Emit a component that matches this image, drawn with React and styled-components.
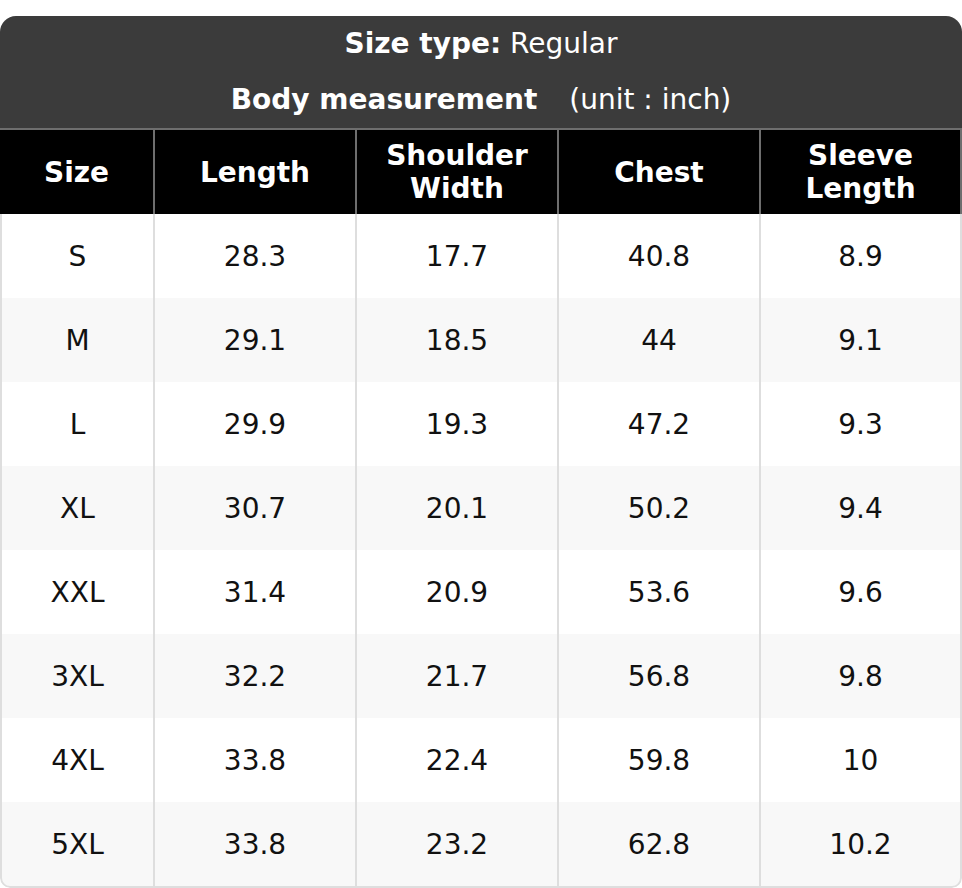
import React from 'react';
import styled, { createGlobalStyle } from 'styled-components';

const GlobalStyle = createGlobalStyle`
  * { box-sizing: border-box; }
  body {
    margin: 0;
    background: #ffffff;
    font-family: "DejaVu Sans", "Liberation Sans", sans-serif;
  }
`;

const Page = styled.div`
  padding-top: 16px;
  width: 962px;
`;

const Wrapper = styled.div`
  border-radius: 16px 16px 10px 10px;
  overflow: hidden;
`;

const Table = styled.table`
  width: 962px;
  table-layout: fixed;
  border-collapse: separate;
  border-spacing: 0;
  font-size: 28px;
`;

const TitleCell = styled.th`
  background: #3b3b3b;
  color: #ffffff;
  padding: 0;
  border-bottom: 2px solid #6e6e6e;
  text-align: center;
`;

const TitleLine = styled.div`
  height: 56px;
  line-height: 56px;
  font-weight: ${(p) => (p.$bold ? 700 : 400)};
`;

const Strong = styled.span`
  font-weight: 700;
`;

const Unit = styled.span`
  font-weight: 400;
  margin-left: 32px;
`;

const HeadCell = styled.th`
  background: #000000;
  color: #ffffff;
  font-weight: 700;
  height: 84px;
  padding: 0 8px;
  line-height: 33px;
  text-align: center;
  border-left: ${(p) => (p.$first ? 'none' : '2px solid #6e6e6e')};
  border-right: ${(p) => (p.$last ? '2px solid #6e6e6e' : 'none')};
`;

const Row = styled.tr`
  background: ${(p) => (p.$alt ? '#f8f8f8' : '#ffffff')};
`;

const Cell = styled.td`
  height: ${(p) => (p.$lastRow ? '86px' : '84px')};
  padding: 0;
  color: #111111;
  text-align: center;
  vertical-align: middle;
  border-left: 2px solid #dedede;
  border-right: ${(p) => (p.$last ? '2px solid #dedede' : 'none')};
  border-bottom: ${(p) => (p.$lastRow ? '2px solid #dedede' : 'none')};
  border-bottom-left-radius: ${(p) => (p.$lastRow && p.$first ? '10px' : '0')};
  border-bottom-right-radius: ${(p) => (p.$lastRow && p.$last ? '10px' : '0')};
`;

const columns = ['Size', 'Length', 'Shoulder Width', 'Chest', 'Sleeve Length'];
const widths = [153, 202, 202, 202, 203];

const rows = [
  ['S', '28.3', '17.7', '40.8', '8.9'],
  ['M', '29.1', '18.5', '44', '9.1'],
  ['L', '29.9', '19.3', '47.2', '9.3'],
  ['XL', '30.7', '20.1', '50.2', '9.4'],
  ['XXL', '31.4', '20.9', '53.6', '9.6'],
  ['3XL', '32.2', '21.7', '56.8', '9.8'],
  ['4XL', '33.8', '22.4', '59.8', '10'],
  ['5XL', '33.8', '23.2', '62.8', '10.2'],
];

export default function App() {
  return (
    <Page>
      <GlobalStyle />
      <Wrapper>
        <Table>
          <colgroup>
            {widths.map((w, i) => (
              <col key={i} style={{ width: w }} />
            ))}
          </colgroup>
          <thead>
            <tr>
              <TitleCell colSpan={5}>
                <TitleLine>
                  <Strong>Size type:</Strong> <span style={{ fontWeight: 400 }}>Regular</span>
                </TitleLine>
                <TitleLine $bold>
                  Body measurement<Unit>(unit : inch)</Unit>
                </TitleLine>
              </TitleCell>
            </tr>
            <tr>
              {columns.map((c, i) => (
                <HeadCell key={c} $first={i === 0} $last={i === columns.length - 1}>
                  {c}
                </HeadCell>
              ))}
            </tr>
          </thead>
          <tbody>
            {rows.map((r, ri) => (
              <Row key={r[0]} $alt={ri % 2 === 1}>
                {r.map((v, ci) => (
                  <Cell
                    key={ci}
                    $first={ci === 0}
                    $last={ci === r.length - 1}
                    $lastRow={ri === rows.length - 1}
                  >
                    {v}
                  </Cell>
                ))}
              </Row>
            ))}
          </tbody>
        </Table>
      </Wrapper>
    </Page>
  );
}
